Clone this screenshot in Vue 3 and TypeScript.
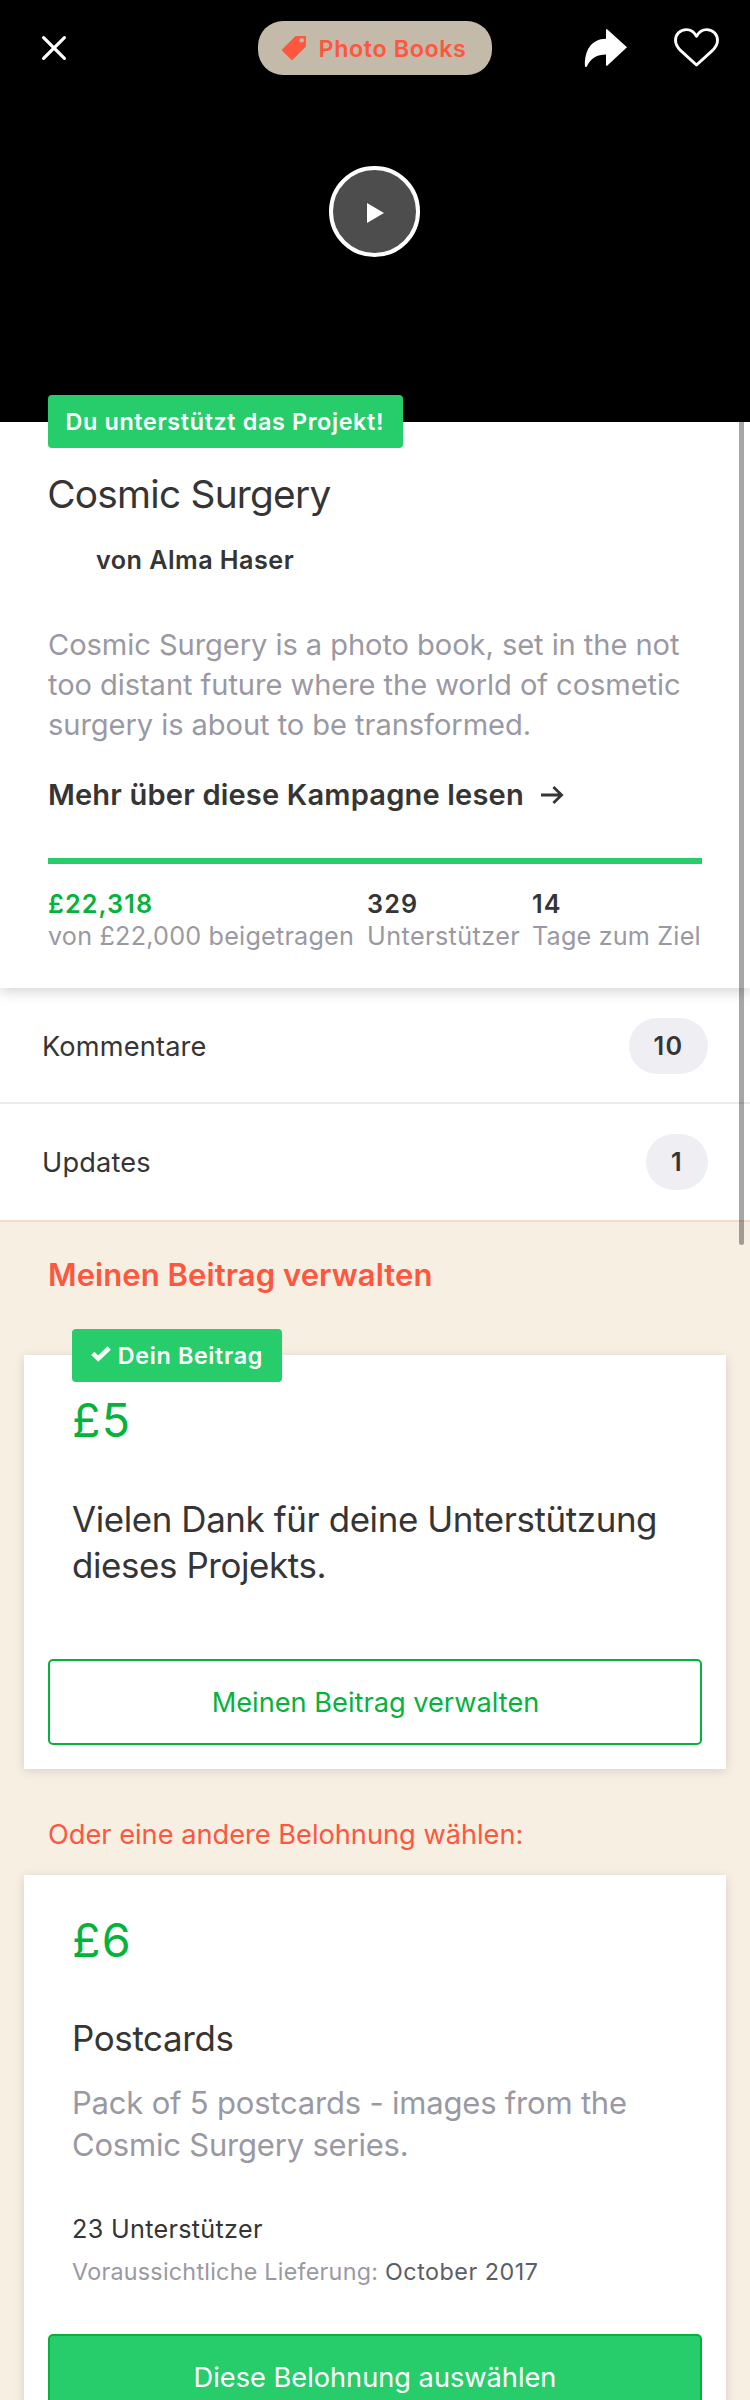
<script setup lang="ts">
interface Stat {
  value: string
  label: string
  kind: string
}

interface Row {
  label: string
  count: number
}

const stats: Stat[] = [
  { value: '£22,318', label: 'von £22,000 beigetragen', kind: 'pledged' },
  { value: '329', label: 'Unterstützer', kind: 'backers' },
  { value: '14', label: 'Tage zum Ziel', kind: 'days' },
]

const rows: Row[] = [
  { label: 'Kommentare', count: 10 },
  { label: 'Updates', count: 1 },
]
</script>

<template>
  <div class="page">
    <header class="hero">
      <nav class="topbar">
        <svg class="close" viewBox="0 0 24 24" fill="none" stroke="#fff" stroke-width="3.2" stroke-linecap="round">
          <path d="M1.6 1.6L22.4 22.4M22.4 1.6L1.6 22.4" />
        </svg>
        <div class="category">
          <svg class="tag" viewBox="0 0 24 24">
            <path
              fill="#ff5640"
              fill-rule="evenodd"
              d="M13.6 0H23Q24 0 24 1V10.6L10.9 23.6Q10 24.4 9.1 23.6L.4 14.9Q-.4 14 .4 13.1ZM19.7 2A2.3 2.3 0 1 0 19.7 6.6A2.3 2.3 0 1 0 19.7 2Z"
            />
          </svg>
          <span>Photo Books</span>
        </div>
        <svg class="share" viewBox="0 0 42 38">
          <path fill="#fff" d="M21 0.4Q21.6 -.4 22.4 .4L42 18.3L22.4 36.4Q21.6 37.2 21 36.4V25.6C12 25.6 6 29 1.8 37.4Q1 38.4 0 37.6C-.8 22 6 10 21 9.8Z" />
        </svg>
        <svg class="heart" viewBox="0 0 45 39" fill="none" stroke="#fff" stroke-width="2.9" stroke-linejoin="round">
          <path d="M22.5 8.2C20 3.8 16.6 1.6 12.4 1.6C6 1.6 1.5 6.3 1.5 12.4C1.5 16.8 3.6 19.6 7 22.9L22.5 37L38 22.9C41.4 19.6 43.5 16.8 43.5 12.4C43.5 6.3 39 1.6 32.6 1.6C28.4 1.6 25 3.8 22.5 8.2Z" />
        </svg>
      </nav>
      <div class="play">
        <svg viewBox="0 0 17 20"><path fill="#fff" d="M0 0L17 10L0 20Z" /></svg>
      </div>
    </header>

    <section class="info">
      <div class="flag">Du unterstützt das Projekt!</div>
      <h1>Cosmic Surgery</h1>
      <p class="author">von Alma Haser</p>
      <p class="blurb">
        Cosmic Surgery is a photo book, set in the not<br />too distant future where the world of cosmetic<br />surgery
        is about to be transformed.
      </p>
      <p class="more">
        <span>Mehr über diese Kampagne lesen</span>
        <svg viewBox="0 0 23 18" fill="none" stroke="#353535" stroke-width="2.8">
          <path d="M0 9H21M12.4 1L20.6 9L12.4 17" />
        </svg>
      </p>
      <div class="progress"></div>
      <div class="stats">
        <div v-for="s in stats" :key="s.kind" :class="['stat', s.kind]">
          <strong>{{ s.value }}</strong>
          <span>{{ s.label }}</span>
        </div>
      </div>
    </section>

    <section class="list">
      <div v-for="r in rows" :key="r.label" class="row">
        <span>{{ r.label }}</span>
        <b>{{ r.count }}</b>
      </div>
    </section>

    <section class="rewards">
      <h2>Meinen Beitrag verwalten</h2>
      <article class="card mine">
        <div class="flag">
          <svg viewBox="0 0 20 16" fill="none" stroke="#fff" stroke-width="4.6">
            <path d="M1.8 7.4L7.2 12.6L18.2 2" />
          </svg>
          <span>Dein Beitrag</span>
        </div>
        <div class="amount">£5</div>
        <p class="title thanks">Vielen Dank für deine Unterstützung<br />dieses Projekts.</p>
        <div class="button outline">Meinen Beitrag verwalten</div>
      </article>

      <h3>Oder eine andere Belohnung wählen:</h3>
      <article class="card other">
        <div class="amount">£6</div>
        <p class="title">Postcards</p>
        <p class="detail">Pack of 5 postcards - images from the<br />Cosmic Surgery series.</p>
        <p class="backed">23 Unterstützer</p>
        <p class="delivery"><span>Voraussichtliche Lieferung:</span><em>October 2017</em></p>
        <div class="button solid">Diese Belohnung auswählen</div>
      </article>
    </section>

    <div class="scrollbar"></div>
  </div>
</template>

<style>
html,
body {
  margin: 0;
  background: #f8efe3;
}
</style>

<style scoped>
.page {
  position: relative;
  width: 750px;
  height: 2400px;
  overflow: hidden;
  background: #fff;
  color: #353535;
  font-family: Inter, 'Liberation Sans', sans-serif;
  white-space: nowrap;
}

.page * {
  box-sizing: border-box;
}

h1,
h2,
h3,
p {
  margin: 0;
  font-weight: 400;
}

svg {
  display: block;
  flex: none;
  overflow: visible;
}

.hero {
  height: 422px;
  padding-top: 21px;
  background: #000;
}

.topbar {
  display: flex;
  align-items: center;
  height: 54px;
  padding-left: 42px;
}

.close {
  width: 24px;
  height: 24px;
}

.category {
  display: flex;
  align-items: center;
  width: 234px;
  height: 54px;
  margin-left: 192px;
  padding-left: 24px;
  border-radius: 25px;
  background: #c3baaa;
  color: #ff5640;
  font-size: 23.3px;
  font-weight: 600;
  letter-spacing: 0.6px;
}

.tag {
  width: 24px;
  height: 24px;
  margin-right: 12.6px;
}

.share {
  width: 42px;
  height: 38px;
  margin-left: 93px;
}

.heart {
  width: 45px;
  height: 39px;
  margin-left: 47px;
  margin-bottom: 1px;
}

.play {
  display: flex;
  align-items: center;
  width: 91px;
  height: 91px;
  margin: 91px 0 0 329px;
  padding: 2px 0 0 34px;
  border: 4px solid #fff;
  border-radius: 50%;
  background: #4d4d4d;
}

.play svg {
  width: 17px;
  height: 20px;
}

.flag {
  display: flex;
  align-items: center;
  height: 53px;
  padding-left: 17.6px;
  border-radius: 4px;
  background: #27cd6a;
  color: #fff;
  font-size: 23.3px;
  font-weight: 600;
  letter-spacing: 0.66px;
}

.info {
  position: relative;
  display: flow-root;
  height: 566px;
  padding: 0 48px;
  background: #fff;
  box-shadow: 0 4px 12px rgba(0, 0, 0, 0.16);
  clip-path: inset(-27px 0 -20px 0);
}

.info .flag {
  width: 355px;
  margin-top: -27px;
}

h1 {
  margin: 22px 0 0 -0.8px;
  font-size: 38.8px;
  line-height: 48px;
  letter-spacing: -0.75px;
}

.author {
  margin: 26px 0 0 48px;
  font-size: 25.2px;
  font-weight: 600;
  line-height: 32px;
  letter-spacing: 0.45px;
}

.blurb {
  margin-top: 49.2px;
  color: #9a99a3;
  font-size: 29.1px;
  line-height: 40px;
  letter-spacing: -0.07px;
}

.more {
  display: flex;
  align-items: center;
  margin-top: 30px;
  font-size: 29.1px;
  font-weight: 600;
  line-height: 40px;
  letter-spacing: 0.16px;
}

.more span {
  width: 492.5px;
}

.more svg {
  width: 23px;
  height: 18px;
}

.progress {
  height: 6px;
  margin-top: 42.8px;
  background: #27cd6a;
}

.stats {
  display: grid;
  grid-template-columns: 319px 165px auto;
  margin-top: 23.8px;
  font-size: 25.2px;
  line-height: 32px;
}

.stat strong,
.stat span {
  display: block;
}

.stat strong {
  font-weight: 600;
  letter-spacing: 1.1px;
}

.stat span {
  color: #9a99a3;
}

.pledged strong {
  color: #05b23c;
}

.pledged span {
  letter-spacing: 0.2px;
}

.backers span {
  letter-spacing: 0.42px;
}

.days span {
  letter-spacing: 0.18px;
}

.row {
  display: flex;
  align-items: center;
  justify-content: space-between;
  height: 116px;
  padding: 0 42px;
  font-size: 27.2px;
  letter-spacing: 0.16px;
}

.row:first-child {
  box-shadow: inset 0 -2px #ececec;
}

.row:last-child {
  box-sizing: content-box;
  width: 666px;
  border-bottom: 2px solid #f6d8ca;
}

.row b {
  min-width: 62px;
  height: 56px;
  padding: 0 24.6px;
  border-radius: 28px;
  background: #efeef3;
  font-size: 25.2px;
  font-weight: 600;
  line-height: 56px;
  letter-spacing: 1.3px;
  text-align: center;
}

.rewards {
  display: flow-root;
  height: 1178px;
  padding: 0 24px;
  background: #f8efe3;
}

h2 {
  margin: 32.7px 0 0 24px;
  color: #ff5640;
  font-size: 31px;
  font-weight: 600;
  line-height: 40px;
  letter-spacing: 0.07px;
}

.card {
  display: flow-root;
  background: #fff;
  box-shadow: 0 2px 10px rgba(0, 0, 0, 0.13);
}

.mine {
  height: 414px;
  margin-top: 60.3px;
}

.mine .flag {
  width: 210px;
  margin: -26px 0 0 48px;
  padding-left: 18.6px;
}

.mine .flag svg {
  width: 20px;
  height: 16px;
  margin: 0 7.2px 2px 0;
}

.amount {
  margin: 10px 0 0 48px;
  color: #05b23c;
  font-size: 46.6px;
  line-height: 56px;
  letter-spacing: 1.2px;
}

.title {
  margin: 47.3px 0 0 48px;
  font-size: 34.9px;
  line-height: 46px;
  letter-spacing: -0.35px;
}

.thanks {
  margin-top: 48.3px;
  letter-spacing: -0.39px;
}

.button {
  height: 86px;
  margin: 0 24px;
  padding-top: 1px;
  border: 2px solid #05b23c;
  border-radius: 5px;
  font-size: 27.2px;
  line-height: 82px;
  text-align: center;
}

.outline {
  margin-top: 70.7px;
  padding-left: 1px;
  color: #05b23c;
}

h3 {
  margin: 48px 0 0 24px;
  color: #ff5640;
  font-size: 27.2px;
  line-height: 36px;
}

.other {
  height: 640px;
  margin-top: 22px;
}

.other .amount {
  margin-top: 37px;
}

.detail {
  margin: 20.4px 0 0 48px;
  color: #9a99a3;
  font-size: 31px;
  line-height: 42px;
  letter-spacing: -0.2px;
}

.backed {
  margin: 47.1px 0 0 48px;
  font-size: 25.2px;
  line-height: 32px;
  letter-spacing: 0.3px;
}

.delivery {
  display: flex;
  margin: 11px 0 0 48px;
  color: #9a99a3;
  font-size: 23.3px;
  line-height: 32px;
  letter-spacing: 0.26px;
}

.delivery span {
  width: 313px;
}

.delivery em {
  color: #5d5d66;
  font-style: normal;
  letter-spacing: 0.52px;
}

.solid {
  margin-top: 46.2px;
  background: #27cd6a;
  color: #fff;
}

.scrollbar {
  position: absolute;
  top: 422px;
  left: 739px;
  width: 5px;
  height: 823px;
  border-radius: 0 0 3px 3px;
  background: rgba(0, 0, 0, 0.35);
}
</style>
